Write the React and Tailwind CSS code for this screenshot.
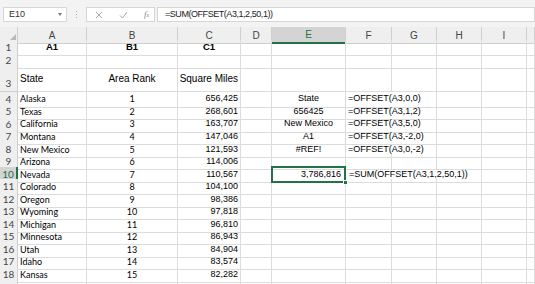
const COLS = "grid-cols-[18px_69px_91px_63px_31px_74px_46px_45px_45px_45px_1fr]";
const ARIAL = "font-['Liberation_Sans',Arial,sans-serif]";
const CALI = "font-['Lato','Open_Sans',sans-serif]";

const states = [
  ["Alaska", 1, "656,425"],
  ["Texas", 2, "268,601"],
  ["California", 3, "163,707"],
  ["Montana", 4, "147,046"],
  ["New Mexico", 5, "121,593"],
  ["Arizona", 6, "114,006"],
  ["Nevada", 7, "110,567"],
  ["Colorado", 8, "104,100"],
  ["Oregon", 9, "98,386"],
  ["Wyoming", 10, "97,818"],
  ["Michigan", 11, "96,810"],
  ["Minnesota", 12, "86,943"],
  ["Utah", 13, "84,904"],
  ["Idaho", 14, "83,574"],
  ["Kansas", 15, "82,282"],
];

const offsets = {
  4: ["State", "=OFFSET(A3,0,0)"],
  5: ["656425", "=OFFSET(A3,1,2)"],
  6: ["New Mexico", "=OFFSET(A3,5,0)"],
  7: ["A1", "=OFFSET(A3,-2,0)"],
  8: ["#REF!", "=OFFSET(A3,0,-2)"],
};

function Cell({ className = "", children }) {
  return (
    <div
      className={`border-r border-b border-[#dcdcdc] px-[2px] flex items-center whitespace-nowrap overflow-visible text-black ${className}`}
    >
      {children}
    </div>
  );
}

function Empty({ n = 1 }) {
  return Array.from({ length: n }).map((_, i) => <Cell key={i} />);
}

function RowHead({ n, active, bottom }) {
  return (
    <div
      className={`flex justify-center border-b border-[#cfcfcf] text-[10px] ${CALI} ${
        bottom ? "items-end" : "items-center"
      } ${
        active
          ? "bg-[#d4d4d4] text-[#217346] border-r-2 border-r-[#217346]"
          : "bg-[#efefef] text-[#444] border-r border-r-[#cfcfcf]"
      }`}
    >
      {n}
    </div>
  );
}

function Toolbar() {
  return (
    <div className="h-[27px] bg-[#f3f3f3] flex items-start pt-[7px]">
      <div className="ml-[3px] w-[64px] h-[15px] bg-white border border-[#d6d6d6] flex items-center justify-between pl-[5px] pr-[4px]">
        <span className={`text-[9px] text-[#333] ${ARIAL}`}>E10</span>
        <span className="w-0 h-0 border-l-[2.5px] border-r-[2.5px] border-t-[3px] border-l-transparent border-r-transparent border-t-[#777]" />
      </div>
      <div className="w-[19px] h-[15px] flex flex-col items-center justify-center gap-[2px]">
        <span className="w-[1px] h-[1px] bg-[#aaa]" />
        <span className="w-[1px] h-[1px] bg-[#aaa]" />
        <span className="w-[1px] h-[1px] bg-[#aaa]" />
      </div>
      <div className="w-[69px] h-[15px] bg-white border border-[#d6d6d6] flex items-center pl-[8px] gap-[16px]">
        <svg width="8" height="8" viewBox="0 0 8 8" stroke="#a8a8a8" strokeWidth="1" fill="none">
          <path d="M1 1L7 7M7 1L1 7" />
        </svg>
        <svg width="9" height="8" viewBox="0 0 9 8" stroke="#a8a8a8" strokeWidth="1" fill="none">
          <path d="M1 4.5L3.5 7L8 1" />
        </svg>
        <span className="text-[9px] italic text-[#888] font-['Liberation_Serif',serif] leading-none">
          f<span className="text-[6px]">x</span>
        </span>
      </div>
      <div className={`ml-[2px] flex-1 h-[15px] bg-white border border-[#d6d6d6] flex items-center pl-[7px] text-[9px] tracking-[-0.45px] text-[#222] ${ARIAL}`}>
        =SUM(OFFSET(A3,1,2,50,1))
      </div>
    </div>
  );
}

function HeaderRow() {
  const letters = ["A", "B", "C", "D", "E", "F", "G", "H", "I", ""];
  return (
    <div className={`grid ${COLS} h-[13px]`}>
      <div className="bg-[#efefef] border-r border-b border-[#cfcfcf] flex items-end justify-end p-[1px]">
        <svg width="8" height="8" viewBox="0 0 8 8">
          <path d="M8 0L8 8L0 8Z" fill="#b8b8b8" />
        </svg>
      </div>
      {letters.map((l, i) => (
        <div
          key={i}
          className={`flex items-center justify-center text-[10px] ${ARIAL} border-r border-r-[#cfcfcf] ${
            l === "E"
              ? "bg-[#d4d4d4] text-[#217346] border-b-2 border-b-[#217346]"
              : "bg-[#efefef] text-[#444] border-b border-b-[#cfcfcf]"
          }`}
        >
          {l}
        </div>
      ))}
    </div>
  );
}

export default function App() {
  return (
    <div className="w-[535px] h-[284px] overflow-hidden bg-white">
      <Toolbar />
      <HeaderRow />

      {/* row 1 */}
      <div className={`grid ${COLS} h-[12.75px]`}>
        <RowHead n={1} />
        <Cell className={`justify-center font-bold text-[9.5px] ${ARIAL}`}>A1</Cell>
        <Cell className={`justify-center font-bold text-[9.5px] ${ARIAL}`}>B1</Cell>
        <Cell className={`justify-center font-bold text-[9.5px] ${ARIAL}`}>C1</Cell>
        <Empty n={7} />
      </div>

      {/* row 2 */}
      <div className={`grid ${COLS} h-[12.75px]`}>
        <RowHead n={2} />
        <Empty n={10} />
      </div>

      {/* row 3 */}
      <div className={`grid ${COLS} h-[26.2px]`}>
        <RowHead n={3} bottom />
        <Cell className={`text-[10px] ${ARIAL}`}>State</Cell>
        <Cell className={`justify-center text-[10px] ${ARIAL}`}>Area Rank</Cell>
        <Cell className={`justify-end text-[10px] ${ARIAL}`}>Square Miles</Cell>
        <Empty n={7} />
      </div>

      {states.map(([name, rank, miles], i) => {
        const n = i + 4;
        const off = offsets[n];
        const active = n === 10;
        return (
          <div key={n} className={`grid ${COLS} h-[12.53px]`}>
            <RowHead n={n} active={active} />
            <Cell className={`text-[9px] ${CALI}`}>{name}</Cell>
            <Cell className={`justify-center text-[9px] ${CALI}`}>{rank}</Cell>
            <Cell className={`justify-end text-[9px] ${ARIAL}`}>{miles}</Cell>
            <Cell />
            {off ? (
              <>
                <Cell className={`justify-center text-[9px] ${ARIAL}`}>{off[0]}</Cell>
                <Cell className={`col-span-2 text-[9px] ${ARIAL}`}>{off[1]}</Cell>
                <Empty n={3} />
              </>
            ) : active ? (
              <>
                <Cell className={`relative justify-end pr-[4px] text-[9px] ${ARIAL}`}>
                  3,786,816
                  <div className="absolute -left-[1px] -top-[1px] right-[-1px] bottom-[-1px] border-2 border-[#217346]" />
                  <div className="absolute right-[-3px] bottom-[-3px] w-[5px] h-[5px] bg-[#217346] border border-white" />
                </Cell>
                <Cell className={`col-span-3 pl-[3px] text-[9px] ${ARIAL}`}>=SUM(OFFSET(A3,1,2,50,1))</Cell>
                <Empty n={2} />
              </>
            ) : (
              <Empty n={6} />
            )}
          </div>
        );
      })}

      {/* row 19, only its top edge is in view */}
      <div className={`grid ${COLS} h-[12.53px]`}>
        <RowHead n="" />
        <Empty n={10} />
      </div>
    </div>
  );
}
